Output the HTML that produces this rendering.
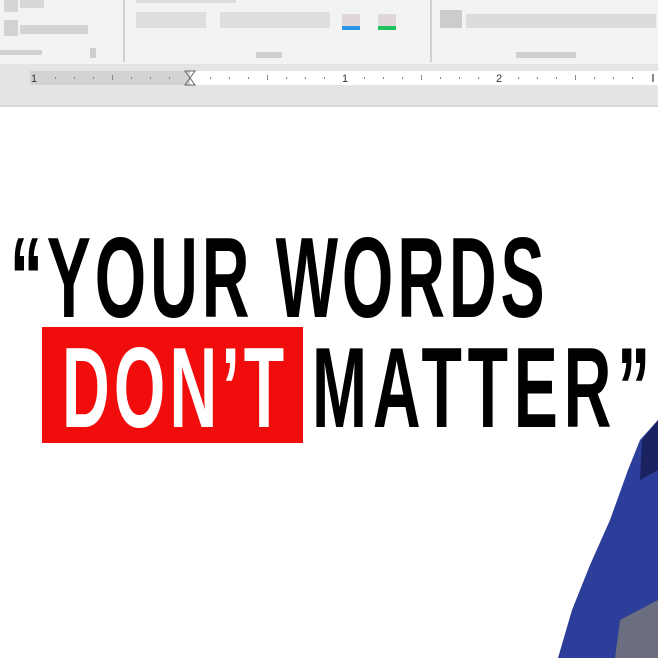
<!DOCTYPE html>
<html><head><style>
html,body{margin:0;padding:0;width:658px;height:658px;overflow:hidden;background:#fff}
</style></head><body>
<svg width="658" height="658" viewBox="0 0 658 658" xmlns="http://www.w3.org/2000/svg">
<rect x="0" y="0" width="658" height="64" fill="#f3f3f3"/>
<rect x="0" y="64" width="658" height="42" fill="#e4e4e4"/>
<rect x="0" y="105" width="658" height="2" fill="#d8d8d8"/>
<rect x="4" y="0" width="14" height="12" fill="#d6d6d6"/>
<rect x="20" y="0" width="24" height="8" fill="#d8d8d8"/>
<rect x="4" y="20" width="14" height="16" fill="#d2d2d2"/>
<rect x="20" y="25" width="68" height="9" fill="#d4d4d4"/>
<rect x="0" y="50" width="42" height="5" fill="#d0d0d0"/>
<rect x="90" y="48" width="6" height="10" fill="#cfcfcf"/>
<rect x="123" y="0" width="2" height="62" fill="#d0d0d0"/>
<rect x="430" y="0" width="2" height="62" fill="#d0d0d0"/>
<rect x="136" y="0" width="100" height="3" fill="#dcdcdc"/>
<rect x="136" y="12" width="70" height="16" fill="#dedede"/>
<rect x="220" y="12" width="110" height="16" fill="#dedede"/>
<rect x="342" y="14" width="18" height="12" fill="#e0d8d8"/>
<rect x="342" y="26" width="18" height="4" fill="#2a96e8"/>
<rect x="378" y="14" width="18" height="12" fill="#e0d8d8"/>
<rect x="378" y="26" width="18" height="4" fill="#1fc25a"/>
<rect x="256" y="52" width="26" height="6" fill="#cfcfcf"/>
<rect x="440" y="10" width="22" height="18" fill="#cccccc"/>
<rect x="466" y="14" width="190" height="14" fill="#dcdcdc"/>
<rect x="516" y="52" width="60" height="6" fill="#cfcfcf"/>
<rect x="30" y="71" width="160" height="14" fill="#d2d2d2"/>
<rect x="190" y="71" width="468" height="14" fill="#ffffff"/>
<text x="31" y="82" font-family="Liberation Sans" font-size="11" fill="#333">1</text>
<text x="342" y="82" font-family="Liberation Sans" font-size="11" fill="#333">1</text>
<text x="496" y="82" font-family="Liberation Sans" font-size="11" fill="#333">2</text>
<path d="M185 71h10l-10 14h10z" fill="none" stroke="#666" stroke-width="1"/>
<g fill="#888">
<rect x="55" y="77" width="1" height="2"/><rect x="74" y="77" width="1" height="2"/><rect x="93" y="77" width="1" height="2"/><rect x="112" y="75" width="1" height="5"/><rect x="131" y="77" width="1" height="2"/><rect x="150" y="77" width="1" height="2"/><rect x="169" y="77" width="1" height="2"/>
<rect x="210" y="77" width="1" height="2"/><rect x="229" y="77" width="1" height="2"/><rect x="248" y="77" width="1" height="2"/><rect x="267" y="75" width="1" height="5"/><rect x="286" y="77" width="1" height="2"/><rect x="305" y="77" width="1" height="2"/><rect x="324" y="77" width="1" height="2"/>
<rect x="364" y="77" width="1" height="2"/><rect x="383" y="77" width="1" height="2"/><rect x="402" y="77" width="1" height="2"/><rect x="421" y="75" width="1" height="5"/><rect x="440" y="77" width="1" height="2"/><rect x="459" y="77" width="1" height="2"/><rect x="478" y="77" width="1" height="2"/>
<rect x="518" y="77" width="1" height="2"/><rect x="537" y="77" width="1" height="2"/><rect x="556" y="77" width="1" height="2"/><rect x="575" y="75" width="1" height="5"/><rect x="594" y="77" width="1" height="2"/><rect x="613" y="77" width="1" height="2"/><rect x="632" y="77" width="1" height="2"/><rect x="652" y="74" width="2" height="8"/>
</g>
<path d="M658 420 L640 440 L628 470 L610 520 L590 565 L572 610 L558 658 L658 658 Z" fill="#2c3e9a"/>
<path d="M658 420 L642 440 L640 480 L658 470 Z" fill="#1a2260"/>
<path d="M620 620 L658 600 L658 658 L615 658 Z" fill="#6a6e80"/>
<rect x="42" y="327" width="261" height="116" fill="#f20d0d"/>
<g transform="scale(0.58,1)" font-family="Liberation Sans" font-weight="bold" font-size="114">
<text x="17" y="317" textLength="922" lengthAdjust="spacing" fill="#000">“YOUR WORDS</text>
<text x="107" y="427" textLength="383" lengthAdjust="spacing" fill="#fff">DON’T</text>
<text x="538" y="427" textLength="583" lengthAdjust="spacing" fill="#000">MATTER”</text>
</g>
</svg>
</body></html>
